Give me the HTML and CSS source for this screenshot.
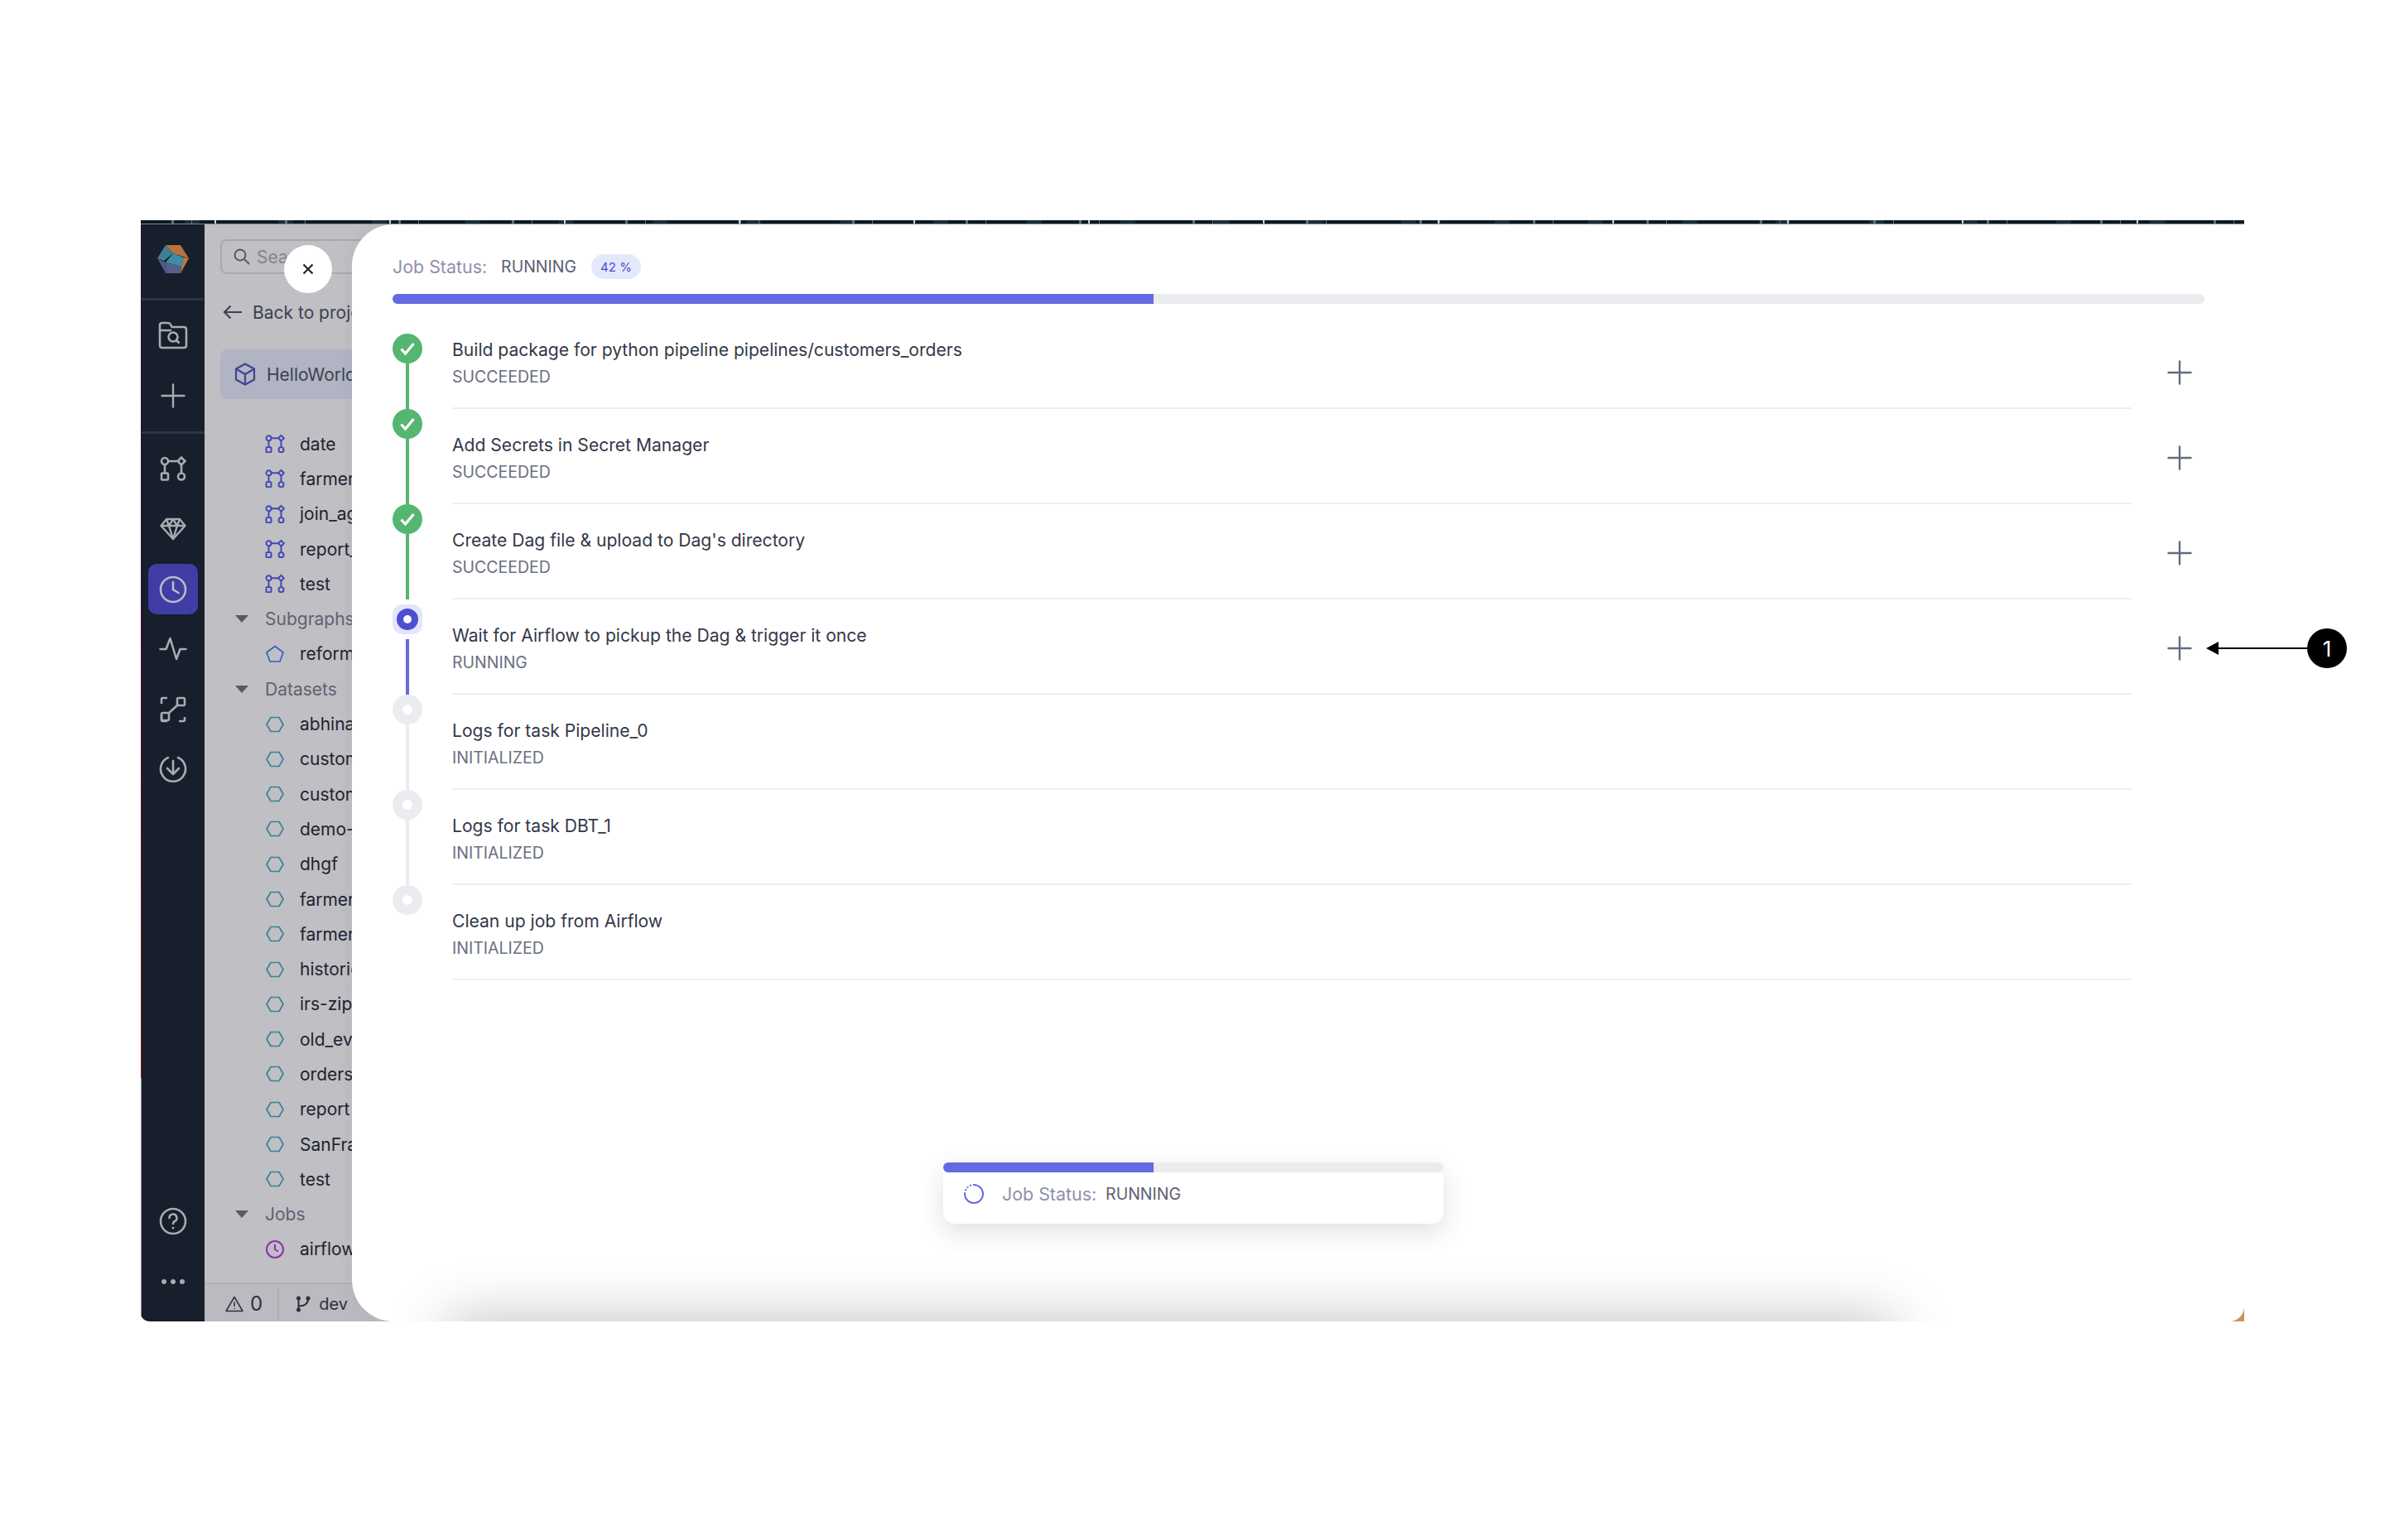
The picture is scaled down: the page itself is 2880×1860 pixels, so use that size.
FILE: index.html
```html
<!DOCTYPE html>
<html>
<head>
  <title>Job Status</title>
  <link rel="stylesheet" href="styles.css">
</head>
<body>
  <svg class="icon-defs" width="0" height="0">
    <symbol id="i-pipeline" viewBox="0 0 32 32" fill="none" stroke="currentColor" stroke-width="2.6">
      <circle cx="6" cy="7" r="4"/>
      <path d="M26 2.5l4.5 4.5-4.5 4.5-4.5-4.5z"/>
      <rect x="2" y="21.5" width="8" height="8" rx="1"/>
      <circle cx="26" cy="25.5" r="4"/>
      <path d="M10 7h11.5M6 11v10.5M26 11.5v10"/>
    </symbol>
    <symbol id="i-hex" viewBox="0 0 24 24" fill="none" stroke="currentColor" stroke-width="1.7" stroke-linejoin="round">
      <path d="M7 3.5h10l5 8.5-5 8.5H7L2 12z"/>
    </symbol>
    <symbol id="i-check" viewBox="0 0 36 36" fill="none" stroke="#fff" stroke-width="3.2">
      <path d="M10.5 18.5l5 5.5 10-12"/>
    </symbol>
    <symbol id="i-plus" viewBox="0 0 30 30" fill="none" stroke="currentColor" stroke-width="2.4" stroke-linecap="round">
      <path d="M15 1.5v27M1.5 15h27"/>
    </symbol>
  </svg>

  <div class="frame">
    <div class="noise-band"></div>
    <div class="app">
      <nav class="rail">
        <div class="rail-logo">
          <svg width="38" height="34" viewBox="0 0 38 34">
            <polygon points="10,0 28,0 38,16 19,10" fill="#b9733c"/>
            <polygon points="10,0 19,10 8,19 0,16" fill="#3f7e95"/>
            <polygon points="19,10 32,15 29,26 10,21" fill="#3e8ca6"/>
            <polygon points="32,15 38,16 28,34 29,26" fill="#b97c3e"/>
            <polygon points="0,16 10,21 12,34 10,34" fill="#4b5b85"/>
            <polygon points="10,21 29,26 28,34 12,34" fill="#5a5e8f"/>
          </svg>
        </div>
        <div class="rail-group rail-group-top">
          <div class="rail-item">
            <svg width="36" height="34" viewBox="0 0 36 34" fill="none" stroke="currentColor" stroke-width="2.6" stroke-linejoin="round">
              <path d="M2 28V5q0-3 3-3h7q2 0 3 2l1.5 3H31q3 0 3 3v19q0 3-3 3H5q-3 0-3-3z"/>
              <path d="M2 11h14"/>
              <circle cx="18" cy="19" r="5.5"/>
              <path d="M22 23l3.5 3.5"/>
            </svg>
          </div>
          <div class="rail-item">
            <svg width="30" height="30" viewBox="0 0 30 30"><use href="#i-plus"/></svg>
          </div>
        </div>
        <div class="rail-group">
          <div class="rail-item">
            <svg width="32" height="32"><use href="#i-pipeline"/></svg>
          </div>
          <div class="rail-item">
            <svg width="32" height="28" viewBox="0 0 32 28" fill="none" stroke="currentColor" stroke-width="2.4" stroke-linejoin="round">
              <path d="M8 2h16l6.5 8L16 26 1.5 10z"/>
              <path d="M1.5 10h29M11 10l5 16 5-16M8 2l3 8 5-8 5 8 3-8"/>
            </svg>
          </div>
          <div class="rail-item rail-item-active">
            <svg width="34" height="34" viewBox="0 0 34 34" fill="none" stroke="currentColor" stroke-width="2.6">
              <circle cx="17" cy="17" r="15"/>
              <path d="M17 8v9l6.5 4" stroke-linecap="round"/>
            </svg>
          </div>
          <div class="rail-item">
            <svg width="34" height="30" viewBox="0 0 34 30" fill="none" stroke="currentColor" stroke-width="2.6" stroke-linecap="round" stroke-linejoin="round">
              <path d="M1.5 15h7L13.5 2 21 27l4.5-12h7"/>
            </svg>
          </div>
          <div class="rail-item">
            <svg width="32" height="32" viewBox="0 0 32 32" fill="none" stroke="currentColor" stroke-width="2.6">
              <path d="M2 9V3.5Q2 2 3.5 2H9M2 23v5.5Q2 30 3.500 30H9M23 30h5.5q1.5 0 1.5-1.5V25"/>
              <rect x="21" y="2" width="9" height="9" rx="1.5"/>
              <rect x="2" y="20" width="9" height="9" rx="1.5"/>
              <path d="M11 20l10-9"/>
            </svg>
          </div>
          <div class="rail-item">
            <svg width="34" height="34" viewBox="0 0 34 34" fill="none" stroke="currentColor" stroke-width="2.6" stroke-linecap="round" stroke-linejoin="round">
              <path d="M11 3a15 15 0 1 0 12 0"/>
              <path d="M17 7v15M10 16l7 7 7-7"/>
            </svg>
          </div>
        </div>
        <div class="rail-bottom">
          <div class="rail-item">
            <svg width="34" height="34" viewBox="0 0 34 34" fill="none" stroke="currentColor" stroke-width="2.6" stroke-linecap="round">
              <circle cx="17" cy="17" r="15"/>
              <path d="M12.5 13a4.5 4.5 0 1 1 6.5 4q-2 1-2 3"/>
              <path d="M17 25v.2"/>
            </svg>
          </div>
          <div class="rail-item rail-dots"><i></i><i></i><i></i></div>
        </div>
      </nav>

      <section class="panel">
        <div class="panel-main">
          <div class="search">
            <svg width="20" height="20" viewBox="0 0 20 20" fill="none" stroke="#565966" stroke-width="2">
              <circle cx="8" cy="8" r="6.5"/>
              <path d="M13 13l6 6"/>
            </svg>
            <span>Search</span>
          </div>
          <div class="back">
            <svg width="24" height="18" viewBox="0 0 24 18" fill="none" stroke="#3d4150" stroke-width="2.2">
              <path d="M23 9H2M9.5 1.5L2 9l7.5 7.5"/>
            </svg>
            <span>Back to project</span>
          </div>
          <div class="project">
            <svg width="26" height="28" viewBox="0 0 26 28" fill="none" stroke="#3f4590" stroke-width="2.2" stroke-linejoin="round">
              <path d="M13 1.5l11 6v13l-11 6-11-6v-13z"/>
              <path d="M2 7.5l11 6.5 11-6.5M13 14v12.5"/>
            </svg>
            <span>HelloWorld</span>
          </div>

          <ul class="tree">
            <li class="tree-row"><svg class="ic-pipeline"><use href="#i-pipeline"/></svg>date</li>
            <li class="tree-row"><svg class="ic-pipeline"><use href="#i-pipeline"/></svg>farmers</li>
            <li class="tree-row"><svg class="ic-pipeline"><use href="#i-pipeline"/></svg>join_agg</li>
            <li class="tree-row"><svg class="ic-pipeline"><use href="#i-pipeline"/></svg>report_top</li>
            <li class="tree-row"><svg class="ic-pipeline"><use href="#i-pipeline"/></svg>test</li>
            <li class="tree-head"><i class="caret"></i>Subgraphs</li>
            <li class="tree-row">
              <svg class="ic-sub" viewBox="0 0 24 24" fill="none" stroke="currentColor" stroke-width="1.7" stroke-linejoin="round"><path d="M12 2.5l10 7.5-4 11H6L2 10z"/></svg>reformat
            </li>
            <li class="tree-head"><i class="caret"></i>Datasets</li>
            <li class="tree-row"><svg class="ic-hex"><use href="#i-hex"/></svg>abhinav</li>
            <li class="tree-row"><svg class="ic-hex"><use href="#i-hex"/></svg>customers</li>
            <li class="tree-row"><svg class="ic-hex"><use href="#i-hex"/></svg>customer_orders</li>
            <li class="tree-row"><svg class="ic-hex"><use href="#i-hex"/></svg>demo-data</li>
            <li class="tree-row"><svg class="ic-hex"><use href="#i-hex"/></svg>dhgf</li>
            <li class="tree-row"><svg class="ic-hex"><use href="#i-hex"/></svg>farmers</li>
            <li class="tree-row"><svg class="ic-hex"><use href="#i-hex"/></svg>farmers_agg</li>
            <li class="tree-row"><svg class="ic-hex"><use href="#i-hex"/></svg>historic</li>
            <li class="tree-row"><svg class="ic-hex"><use href="#i-hex"/></svg>irs-zipcode</li>
            <li class="tree-row"><svg class="ic-hex"><use href="#i-hex"/></svg>old_events</li>
            <li class="tree-row"><svg class="ic-hex"><use href="#i-hex"/></svg>orders</li>
            <li class="tree-row"><svg class="ic-hex"><use href="#i-hex"/></svg>report</li>
            <li class="tree-row"><svg class="ic-hex"><use href="#i-hex"/></svg>SanFrancisco</li>
            <li class="tree-row"><svg class="ic-hex"><use href="#i-hex"/></svg>test</li>
            <li class="tree-head"><i class="caret"></i>Jobs</li>
            <li class="tree-row">
              <svg class="ic-job" viewBox="0 0 24 24" fill="none" stroke="currentColor" stroke-width="2"><circle cx="12" cy="12" r="10"/><path d="M12 6v6l4 2.5"/></svg>airflow
            </li>
          </ul>
        </div>
        <footer class="status-bar">
          <svg width="22" height="20" viewBox="0 0 22 20" fill="none" stroke="#2d303c" stroke-width="1.5" stroke-linejoin="round">
            <path d="M11 1.5L21 18.5H1z"/>
            <path d="M11 7.5v5.5M11 15v1"/>
          </svg>
          <span class="warn-count">0</span>
          <i class="status-sep"></i>
          <svg width="18" height="20" viewBox="0 0 18 20" fill="#2d303c">
            <circle cx="3.5" cy="3" r="2.5"/>
            <circle cx="3.5" cy="17" r="2.5"/>
            <circle cx="15" cy="3" r="2.5"/>
            <path d="M2.5 3h2v14h-2zM3.5 11.5q10.5 0 10.5-8h2q0 10-12.5 10z"/>
          </svg>
          <span class="branch">dev</span>
        </footer>
      </section>

      <main class="modal">
        <div class="modal-glow"></div>
        <header class="job-head">
          <span class="job-label">Job Status:</span>
          <span class="job-value">RUNNING</span>
          <span class="job-badge">42 %</span>
        </header>
        <div class="progress"><div class="progress-fill" style="width: 42%"></div></div>

        <div class="steps">
          <div class="step step-first step-done">
            <div class="mark">
              <span class="dot dot-done"><svg width="36" height="36"><use href="#i-check"/></svg></span>
              <i class="mark-line"></i>
            </div>
            <div class="step-body">
              <div class="step-title">Build package for python pipeline pipelines/customers_orders</div>
              <div class="step-state">SUCCEEDED</div>
            </div>
            <div class="step-more"><svg width="30" height="30"><use href="#i-plus"/></svg></div>
          </div>

          <div class="step step-done">
            <div class="mark">
              <span class="dot dot-done"><svg width="36" height="36"><use href="#i-check"/></svg></span>
              <i class="mark-line"></i>
            </div>
            <div class="step-body">
              <div class="step-title">Add Secrets in Secret Manager</div>
              <div class="step-state">SUCCEEDED</div>
            </div>
            <div class="step-more"><svg width="30" height="30"><use href="#i-plus"/></svg></div>
          </div>

          <div class="step step-done">
            <div class="mark">
              <span class="dot dot-done"><svg width="36" height="36"><use href="#i-check"/></svg></span>
              <i class="mark-line"></i>
            </div>
            <div class="step-body">
              <div class="step-title">Create Dag file &amp; upload to Dag's directory</div>
              <div class="step-state">SUCCEEDED</div>
            </div>
            <div class="step-more"><svg width="30" height="30"><use href="#i-plus"/></svg></div>
          </div>

          <div class="step step-running">
            <div class="mark">
              <span class="dot dot-running"><i></i></span>
              <i class="mark-line"></i>
            </div>
            <div class="step-body">
              <div class="step-title">Wait for Airflow to pickup the Dag &amp; trigger it once</div>
              <div class="step-state">RUNNING</div>
            </div>
            <div class="step-more"><svg width="30" height="30"><use href="#i-plus"/></svg></div>
          </div>

          <div class="step step-idle">
            <div class="mark">
              <span class="dot dot-idle"><i></i></span>
              <i class="mark-line"></i>
            </div>
            <div class="step-body">
              <div class="step-title">Logs for task Pipeline_0</div>
              <div class="step-state">INITIALIZED</div>
            </div>
            <div class="step-more"></div>
          </div>

          <div class="step step-idle">
            <div class="mark">
              <span class="dot dot-idle"><i></i></span>
              <i class="mark-line"></i>
            </div>
            <div class="step-body">
              <div class="step-title">Logs for task DBT_1</div>
              <div class="step-state">INITIALIZED</div>
            </div>
            <div class="step-more"></div>
          </div>

          <div class="step step-idle">
            <div class="mark">
              <span class="dot dot-idle"><i></i></span>
            </div>
            <div class="step-body">
              <div class="step-title">Clean up job from Airflow</div>
              <div class="step-state">INITIALIZED</div>
            </div>
            <div class="step-more"></div>
          </div>
        </div>

        <div class="toast">
          <div class="progress toast-bar"><div class="progress-fill" style="width: 42%"></div></div>
          <div class="toast-row">
            <svg width="26" height="26" viewBox="0 0 26 26" fill="none" stroke="#6a6ce6" stroke-width="2">
              <path d="M13 2a11 11 0 1 1-11 11"/>
              <path d="M2 13A11 11 0 0 1 13 2" stroke-dasharray="2 2"/>
            </svg>
            <span class="job-label">Job Status:</span>
            <span class="job-value">RUNNING</span>
          </div>
        </div>
      </main>

      <button class="close-btn">
        <svg width="14" height="14" viewBox="0 0 14 14" fill="none" stroke="#23262f" stroke-width="2.2">
          <path d="M1.5 1.5l11 11M12.5 1.5l-11 11"/>
        </svg>
      </button>
    </div>
  </div>

  <div class="callout">
    <i class="callout-head"></i>
    <i class="callout-line"></i>
    <span class="callout-num">1</span>
  </div>
</body>
</html>
```

FILE: styles.css
```css
* {
  box-sizing: border-box;
}

body {
  margin: 0;
  height: 1860px;
  background: #fff;
  font-family: Inter, "Liberation Sans", sans-serif;
  overflow: hidden;
  position: relative;
}

.icon-defs {
  position: absolute;
}

.frame {
  width: 2540px;
  height: 1330px;
  margin: 266px 0 0 170px;
  display: flex;
  flex-direction: column;
}

/* strip of the desktop showing above the window */
.noise-band {
  height: 5px;
  border-bottom: 1px solid #8c8088;
  background:
    repeating-linear-gradient(90deg, transparent 0 89px, #c9d6da 89px 91px, transparent 91px 211px),
    repeating-linear-gradient(90deg, transparent 0 37px, #4f7682 37px 40px, transparent 40px 61px, #5b7680 61px 62px, transparent 62px 137px),
    repeating-linear-gradient(90deg, #0d1a22 0 53px, #15303c 53px 71px, #0d1a22 71px 113px);
}

.app {
  flex: 1;
  display: flex;
  position: relative;
  overflow: hidden;
  border-bottom-left-radius: 10px;
}

/* wallpaper showing through the rounded corner of the modal */
.app::before {
  content: "";
  position: absolute;
  right: 0;
  bottom: 0;
  width: 20px;
  height: 20px;
  background: #c89a55;
}

/* left icon rail */
.rail {
  width: 77px;
  display: flex;
  flex-direction: column;
  background: #171e2c;
  color: #a9abb0;
  border-left: 1px solid;
  border-image: linear-gradient(#2a1530 0, #5a0f28 500px, #a00a20 1030px, #8c8c90 1031px) 1;
}

.rail-logo {
  height: 92px;
  padding-top: 25px;
  margin-right: 1px;
  display: flex;
  justify-content: center;
  border-bottom: 3px solid #2e3442;
}

.rail-group {
  padding: 6px 0;
}

.rail-group-top {
  padding-bottom: 7px;
  border-bottom: 3px solid #2e3442;
}

.rail-bottom {
  margin-top: auto;
  padding-bottom: 12px;
}

.rail-item {
  height: 72.6px;
  display: flex;
  align-items: center;
  justify-content: center;
}

.rail-item-active {
  position: relative;
  color: #b9bac4;
}

.rail-item-active::before {
  content: "";
  position: absolute;
  left: 8px;
  right: 8px;
  top: 6px;
  bottom: 6px;
  background: #3f3ea5;
  border-radius: 10px;
}

.rail-item-active svg {
  position: relative;
}

.rail-dots {
  gap: 5px;
}

.rail-dots i {
  width: 6px;
  height: 6px;
  background: #a9abb0;
  border-radius: 50%;
}

/* project panel, dimmed behind the modal */
.panel {
  flex: 1;
  display: flex;
  flex-direction: column;
  background: #bfbfc4;
  color: #1f2330;
  font-size: 21px;
}

.panel-main {
  flex: 1;
  padding: 18px 0 0 19px;
}

.search {
  width: 300px;
  height: 42px;
  display: flex;
  align-items: center;
  gap: 8px;
  padding-left: 14px;
  border: 2px solid #a7a8b0;
  border-radius: 8px;
  color: #84858f;
}

.back {
  height: 46px;
  margin-top: 23px;
  display: flex;
  align-items: center;
  gap: 12px;
  padding-left: 3px;
  color: #3d4150;
}

.project {
  height: 60px;
  margin-top: 22px;
  width: 320px;
  display: flex;
  align-items: center;
  gap: 13px;
  padding-left: 17px;
  background: #b1b4c2;
  border-radius: 8px;
  color: #3d4150;
}

.tree {
  list-style: none;
  margin: 33px 0 0;
  padding: 0;
}

.tree-row,
.tree-head {
  height: 42.3px;
  display: flex;
  align-items: center;
  white-space: nowrap;
}

.tree-row {
  padding-left: 54px;
  gap: 18px;
}

.tree-row svg {
  width: 24px;
  height: 24px;
  flex: none;
}

.tree-head {
  padding-left: 18px;
  gap: 20px;
  color: #5f6270;
}

.caret {
  width: 0;
  height: 0;
  border-left: 8px solid transparent;
  border-right: 8px solid transparent;
  border-top: 9px solid #565a6a;
}

.ic-pipeline {
  color: #4347b5;
}

.ic-sub {
  color: #3a5fc0;
}

.ic-hex {
  color: #3b8299;
}

.ic-job {
  color: #8f2fb0;
}

.status-bar {
  height: 47px;
  display: flex;
  align-items: center;
  padding: 2px 0 0 25px;
  background: #babac0;
  border-top: 2px solid #b0b0b6;
  color: #2d303c;
  font-size: 20px;
}

.warn-count {
  margin-left: 8px;
  font-size: 24px;
}

.status-sep {
  width: 2px;
  height: 36px;
  margin: 0 20px 0 18px;
  background: #adadb3;
}

.branch {
  margin-left: 10px;
}

.close-btn {
  position: absolute;
  left: 173px;
  top: 25px;
  width: 58px;
  height: 58px;
  display: flex;
  align-items: center;
  justify-content: center;
  padding: 0;
  border: none;
  border-radius: 50%;
  background: #fff;
}

/* job status modal */
.modal {
  position: absolute;
  left: 255px;
  top: 0;
  right: 0;
  bottom: 0;
  padding: 36px 48px 0 49px;
  background: #fff;
  border-radius: 50px 0 18px 50px;
  box-shadow: 0 0 24px rgba(0, 0, 0, 0.05);
  overflow: hidden;
}

.modal-glow {
  position: absolute;
  left: 115px;
  right: 425px;
  bottom: -60px;
  height: 60px;
  box-shadow: 0 0 70px rgba(0, 0, 0, 0.28);
}

.job-head {
  height: 30px;
  display: flex;
  align-items: center;
}

.job-label {
  font-size: 21.4px;
  color: #8f90ad;
}

.job-value {
  margin-left: 17px;
  font-size: 19.5px;
  color: #5b6072;
}

.job-badge {
  margin-left: 18px;
  width: 60px;
  height: 30px;
  display: flex;
  align-items: center;
  justify-content: center;
  background: #e4e8fb;
  border-radius: 15px;
  font-size: 15px;
  color: #4a4ccb;
}

.progress {
  height: 12px;
  margin-top: 18px;
  background: #ebecf0;
  border-radius: 6px;
  overflow: hidden;
}

.progress-fill {
  height: 100%;
  background: #646ae0;
}

.steps {
  margin-top: 36px;
}

.step {
  height: 115px;
  display: flex;
}

.step-first {
  height: 91px;
}

.mark {
  width: 72px;
  flex: none;
  display: flex;
  flex-direction: column;
  align-items: flex-start;
}

.dot {
  width: 36px;
  height: 36px;
  flex: none;
  display: flex;
  align-items: center;
  justify-content: center;
  border-radius: 50%;
}

.dot-done {
  background: #54b671;
}

.dot-running {
  margin-top: 6px;
  background: #e2e6fb;
  border-radius: 12px;
}

.dot-running i {
  width: 26px;
  height: 26px;
  border: 8px solid #4b4fd0;
  border-radius: 50%;
  background: #fff;
}

.dot-idle {
  background: #ebecf0;
}

.dot-idle i {
  width: 12px;
  height: 12px;
  background: #fff;
  border-radius: 50%;
}

.mark-line {
  flex: 1;
  width: 4px;
  margin-left: 16px;
}

.step-done .mark-line {
  background: #54b671;
}

.step-running .mark-line {
  margin-top: 6px;
  background: #646ae0;
}

.step-idle .mark-line {
  background: #ebecf0;
}

.step-body {
  flex: 1;
  padding-top: 26px;
  border-bottom: 2px solid #edeef2;
}

.step-first .step-body {
  padding-top: 2px;
}

.step-title {
  height: 36px;
  line-height: 36px;
  font-size: 21.1px;
  color: #343848;
}

.step-state {
  height: 28px;
  line-height: 28px;
  font-size: 19.5px;
  color: #6a6f82;
}

.step-more {
  width: 88px;
  flex: none;
  display: flex;
  align-items: center;
  padding: 2px 0 0 43px;
  color: #646b80;
}

.toast {
  position: absolute;
  left: 714px;
  top: 1133px;
  width: 604px;
  height: 74px;
  background: #fff;
  border-radius: 14px;
  box-shadow: 0 10px 30px rgba(60, 65, 90, 0.16);
}

.toast-bar {
  margin-top: 0;
}

.toast-row {
  display: flex;
  align-items: center;
  height: 52px;
  padding-left: 24px;
}

.toast-row .job-label {
  margin-left: 21px;
}

.toast-row .job-value {
  margin-left: 11px;
}

/* numbered callout, drawn over the page */
.callout {
  position: absolute;
  left: 2664px;
  top: 759px;
  height: 48px;
  display: flex;
  align-items: center;
}

.callout-head {
  width: 0;
  height: 0;
  border-top: 8px solid transparent;
  border-bottom: 8px solid transparent;
  border-right: 15px solid #000;
}

.callout-line {
  width: 107px;
  height: 2px;
  background: #000;
}

.callout-num {
  width: 48px;
  height: 48px;
  display: flex;
  align-items: center;
  justify-content: center;
  background: #000;
  border-radius: 50%;
  color: #fff;
  font-size: 26px;
}
```
